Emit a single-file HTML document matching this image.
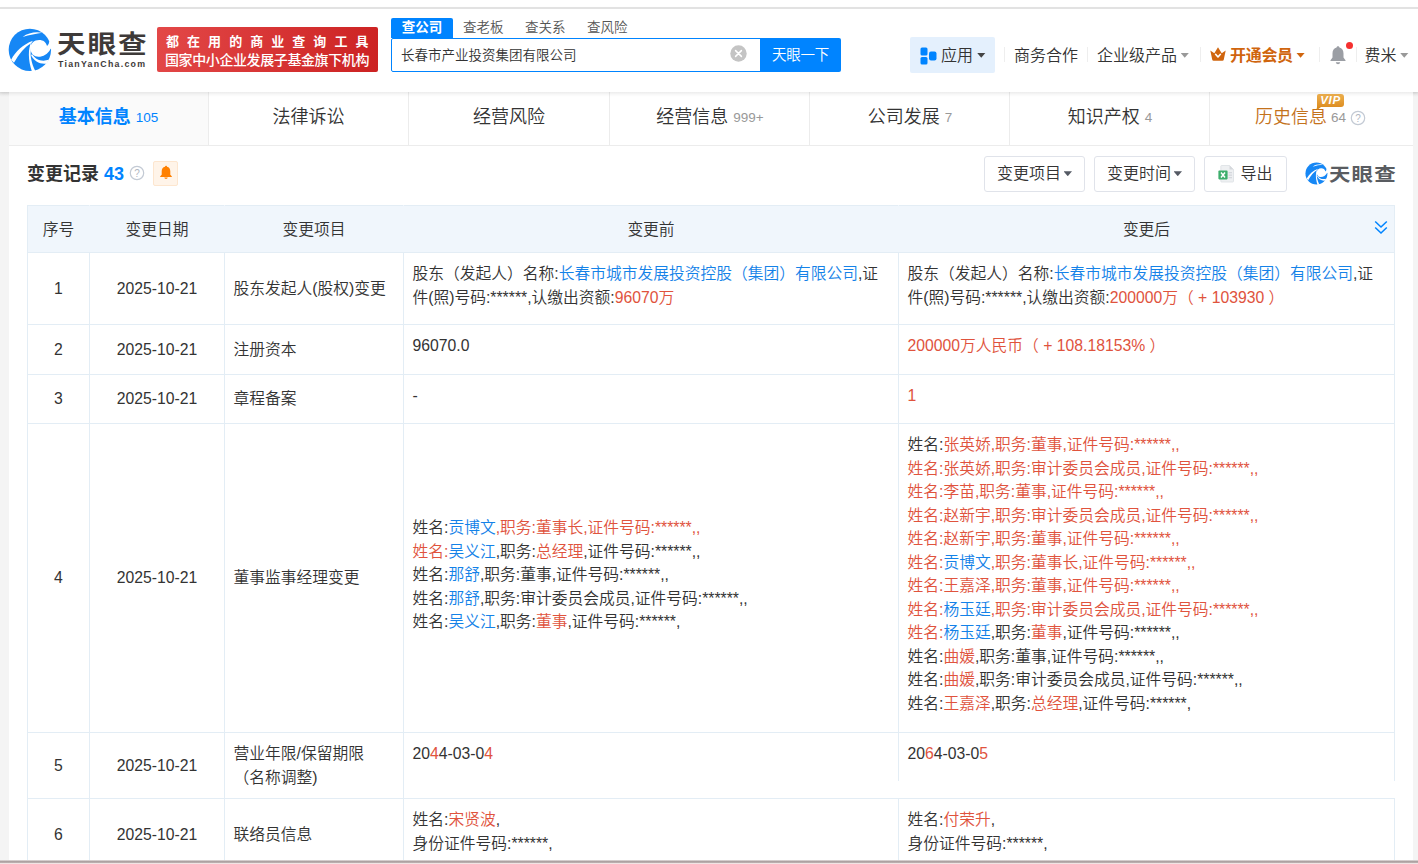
<!DOCTYPE html>
<html lang="zh-CN">
<head>
<meta charset="utf-8">
<title>天眼查 - 变更记录</title>
<style>
*{box-sizing:border-box;margin:0;padding:0}
html,body{width:1418px;height:864px;overflow:hidden;background:#fff}
body{font-weight:350;font-family:"Liberation Sans","Noto Sans CJK SC",sans-serif;color:#333;font-size:16px;position:relative}
.abs{position:absolute}
#topline{left:0;top:7px;width:1418px;height:2px;background:#e2e2e2}
#pagebg{left:0;top:92px;width:1418px;height:772px;background:#f4f4f4}
#panel{left:9px;top:92px;width:1404px;height:772px;background:#fff}
#header{left:0;top:9px;width:1418px;height:83px;background:#fff;box-shadow:0 1px 4px rgba(0,0,0,.12)}
#botline{left:0;top:860px;width:1418px;height:4px;background:linear-gradient(#e9e5e5 0,#aca1a1 35%,#b3a8a8 60%,#f2e5e5 88%)}

/* logo */
#logotext{left:56.600px;top:26px;font-size:25px;line-height:36px;font-weight:700;color:#3e3a39;letter-spacing:1.6px;white-space:nowrap;transform:scaleX(1.145);transform-origin:0 0}
#logosub{left:58px;top:58px;font-size:8.8px;line-height:12px;font-weight:700;color:#3e3a39;letter-spacing:1.25px;white-space:nowrap}
#banner{left:157px;top:27px;width:221px;height:45px;border-radius:2px;background:linear-gradient(100deg,#e34848,#cc2222);color:#fff;font-weight:700;white-space:nowrap}
#banner .l1{position:absolute;left:9px;top:6px;font-size:13px;line-height:18px;letter-spacing:8.05px}
#banner .l2{position:absolute;left:8px;top:23.5px;font-size:14px;line-height:18px;letter-spacing:-.4px;font-weight:500}

/* search */
#stab{left:391px;top:18px;width:62px;height:20px;border-radius:2px 2px 0 0;background:#0084ff;color:#fff;font-size:13.5px;line-height:19px;text-align:center;font-weight:700}
.stab2{top:18px;font-size:13.5px;line-height:19px;color:#555;white-space:nowrap}
#sbox{left:391px;top:38px;width:370px;height:34px;border:1px solid #0084ff;border-radius:2px 0 0 2px;background:#fff}
#sbox span{position:absolute;left:9px;top:0;line-height:33px;font-size:13.5px;color:#333;white-space:nowrap}
#sbtn{left:760px;top:38px;width:81px;height:34px;background:#0084ff;color:#fff;font-size:14.5px;line-height:35px;text-align:center;border-radius:0 2px 2px 0;letter-spacing:-.3px}
#sclear{left:730px;top:45px;width:17px;height:17px}

/* nav */
#app{left:910px;top:37px;width:85px;height:36px;background:#e4f0fd;border-radius:2px}
.nav{top:45px;font-size:16px;line-height:22px;color:#333;white-space:nowrap}
.caret{display:inline-block;width:8.5px;height:4.8px;background:#999;clip-path:polygon(0 0,100% 0,50% 100%);vertical-align:middle;margin-left:3.5px;position:relative;top:-1.5px}
.vsep{top:47px;width:1px;height:15px;background:#eee;margin-left:.5px}

/* tabs */
.tab{top:92px;width:200px;height:54px;border-right:1px solid #ececec;border-bottom:1px solid #ececec;text-align:center;font-size:18px;line-height:50px;color:#333;white-space:nowrap;background:#fff}
.tab small{font-size:13.5px;color:#999;margin-left:5px;font-weight:350;position:relative;top:-1px}
.tab.on{background:#fafafa;color:#0084ff;font-weight:700}
.tab.on small{color:#0084ff}

/* section head */
#sect{left:27px;top:162px;font-size:18px;line-height:25px;font-weight:700;color:#333;white-space:nowrap}
.btn{top:156px;height:36px;border:1px solid #e0e3ea;border-radius:3px;background:#fff;font-size:16px;line-height:34px;color:#333;text-align:center;white-space:nowrap}

/* table */
#tbl{left:27px;top:205px;width:1366.500px;border-collapse:collapse;table-layout:fixed;font-size:15.75px}
#tbl th{background:#f0f6fc;height:47px;padding-bottom:2px;font-weight:350;font-size:15.75px;color:#333;border:1px solid #e3edf5;border-left-color:#f0f6fc;border-right-color:#f0f6fc;text-align:center}
#tbl th:first-child{border-left-color:#e3edf5}#tbl th:last-child{border-right-color:#e3edf5}
#tbl td{border:1px solid #e3edf5;vertical-align:middle;line-height:23.5px;padding:0 9px 0 8.5px;color:#333}
#tbl td.c{text-align:center;padding:0}
#tbl td.t{vertical-align:top}
.r{color:#e0533d}
.b{color:#1482e8}
</style>
</head>
<body>
<div class="abs" id="pagebg"></div>
<div class="abs" id="panel"></div>
<div class="abs" id="header"></div>
<div class="abs" id="topline"></div>

<!-- logo -->
<svg class="abs" style="left:4px;top:24px" width="52" height="52" viewBox="0 0 864 864">
  <circle cx="430" cy="429" r="352" fill="#1687f5"/>
  <path d="M715 365 C700 300 650 265 585 265 C500 265 440 320 440 400 C440 470 470 520 520 537 C610 562 720 520 775 410 L810 420 L810 280 L752 292 C750 320 738 345 715 365 Z" fill="#fff"/>
  <path d="M310 214 C400 142 540 122 636 147 C540 162 420 184 310 214 Z" fill="#fff"/>
  <path d="M118 594 C195 450 310 342 480 278 L452 318 C345 378 250 495 165 645 Z" fill="#fff"/>
  <path d="M454 304 C400 400 395 600 468 800 L520 780 C455 650 432 520 446 440 Z" fill="#fff"/>
  <path d="M466 500 C520 596 625 632 745 596 L712 658 C600 675 500 622 450 520 Z" fill="#fff"/>
</svg>
<div class="abs" id="logotext">天眼查</div>
<div class="abs" id="logosub">TianYanCha.com</div>
<div class="abs" id="banner"><span class="l1">都在用的商业查询工具</span><span class="l2">国家中小企业发展子基金旗下机构</span></div>

<!-- search -->
<div class="abs" id="stab">查公司</div>
<div class="abs stab2" style="left:463px">查老板</div>
<div class="abs stab2" style="left:525px">查关系</div>
<div class="abs stab2" style="left:587px">查风险</div>
<div class="abs" id="sbox"><span>长春市产业投资集团有限公司</span></div>
<svg class="abs" id="sclear" viewBox="0 0 17 17"><circle cx="8.5" cy="8.5" r="8.200" fill="#c4c4c4"/><path d="M5.600 5.600 L11.400 11.400 M11.400 5.600 L5.600 11.400" stroke="#fff" stroke-width="1.500" stroke-linecap="round"/></svg>
<div class="abs" id="sbtn">天眼一下</div>

<!-- nav -->
<div class="abs" id="app"></div>
<svg class="abs" style="left:920px;top:46.500px" width="17" height="18" viewBox="0 0 17 18"><rect x="0.500" y="0.500" width="7" height="8" rx="1.500" fill="#0084ff"/><rect x="0.500" y="10" width="7" height="7.500" rx="1.500" fill="#0084ff"/><rect x="9" y="4.500" width="7.500" height="9" rx="2" fill="#0084ff"/></svg>
<div class="abs nav" style="left:941px">应用<span class="caret" style="background:#444;margin-left:4px"></span></div>
<div class="abs vsep" style="left:1003px"></div>
<div class="abs nav" style="left:1014px">商务合作</div>
<div class="abs vsep" style="left:1086px"></div>
<div class="abs nav" style="left:1097px">企业级产品<span class="caret"></span></div>
<div class="abs vsep" style="left:1199px"></div>
<svg class="abs" style="left:1210px;top:47px" width="16" height="14" viewBox="0 0 16 14"><path d="M0.300 3.600 L4.300 6.200 L8 0.200 L11.700 6.200 L15.700 3.600 L13.800 12.600 Q13.600 13.800 12.400 13.800 L3.600 13.800 Q2.400 13.800 2.200 12.600 Z" fill="#d0650e"/><path d="M5.600 7.300 L8 10 L10.400 7.300" fill="none" stroke="#fff" stroke-width="1.600" stroke-linecap="round" stroke-linejoin="round"/></svg>
<div class="abs nav" style="left:1230px;color:#d0650e;font-weight:700;letter-spacing:-.3px">开通会员<span class="caret" style="background:#d0650e"></span></div>
<div class="abs vsep" style="left:1318px"></div>
<svg class="abs" style="left:1329px;top:45px" width="18" height="21" viewBox="0 0 18 21"><path d="M9 1.200 C9.900 1.200 10.400 1.800 10.400 2.600 C13 3.300 14.500 5.500 14.500 8.500 L14.500 12.500 L16.500 15.200 L16.500 16 L1.500 16 L1.500 15.200 L3.500 12.500 L3.500 8.500 C3.500 5.500 5 3.300 7.600 2.600 C7.600 1.800 8.100 1.200 9 1.200 Z" fill="#9b9ea4"/><path d="M6.800 17.300 L11.200 17.300 C11 18.600 10.100 19.300 9 19.300 C7.900 19.300 7 18.600 6.800 17.300 Z" fill="#9b9ea4"/></svg>
<div class="abs" style="left:1346px;top:41.500px;width:7px;height:7px;border-radius:50%;background:#f5302f"></div>
<div class="abs vsep" style="left:1355px"></div>
<div class="abs nav" style="left:1364.500px">费米<span class="caret"></span></div>

<!-- tabs -->
<div class="abs tab on" style="left:9px">基本信息<small>105</small></div>
<div class="abs tab" style="left:209px">法律诉讼</div>
<div class="abs tab" style="left:409px;width:201px">经营风险</div>
<div class="abs tab" style="left:610px;padding-left:1px">经营信息<small>999+</small></div>
<div class="abs tab" style="left:810px;padding-left:1px">公司发展<small>7</small></div>
<div class="abs tab" style="left:1010px;padding-left:1px">知识产权<small>4</small></div>
<div class="abs tab" style="left:1210px;width:203px;border-right:0;text-align:left;padding-left:45px;color:#c4721c">历史信息<small style="margin-left:4px">64</small></div>
<svg class="abs" style="left:1350px;top:110px" width="16" height="16" viewBox="0 0 16 16"><circle cx="8" cy="8" r="6.700" fill="none" stroke="#c3cad4" stroke-width="1.200"/><text x="8" y="11.600" text-anchor="middle" font-family="Liberation Sans, sans-serif" font-size="10" fill="#b0b6bf">?</text></svg>
<div class="abs" style="left:1317px;top:94px;width:27px;height:13px;border-radius:2px 3px 3px 0;background:linear-gradient(180deg,#eeb04e,#dd8e22);color:#fff;font-size:11.500px;line-height:13px;font-weight:700;font-style:italic;text-align:center;letter-spacing:.6px">VIP</div>
<div class="abs" style="left:1317px;top:107px;width:0;height:0;border-top:3px solid #d98a1e;border-right:4px solid transparent"></div>

<div class="abs" style="left:0;top:92px;width:1418px;height:5px;background:linear-gradient(rgba(0,0,0,.075),rgba(0,0,0,.02) 60%,rgba(0,0,0,0))"></div>
<!-- section head -->
<div class="abs" id="sect">变更记录 <span style="color:#0084ff">43</span></div>
<svg class="abs" style="left:129px;top:165px" width="16" height="16" viewBox="0 0 16 16"><circle cx="8" cy="8" r="6.700" fill="none" stroke="#c3cad4" stroke-width="1.200"/><text x="8" y="11.600" text-anchor="middle" font-family="Liberation Sans, sans-serif" font-size="10" fill="#b0b6bf">?</text></svg>
<div class="abs" style="left:153px;top:161px;width:25px;height:25px;border:1px solid #fde6cf;border-radius:2px;background:#fff4e9"></div>
<svg class="abs" style="left:159px;top:165px" width="14" height="15" viewBox="0 0 14 15"><path d="M7 0.800 C7.600 0.800 8 1.200 8 1.700 C10.200 2.200 11.300 3.900 11.300 6.200 L11.300 9.800 L12.800 11.300 L12.800 12 L1.200 12 L1.200 11.300 L2.700 9.800 L2.700 6.200 C2.700 3.900 3.800 2.200 6 1.700 C6 1.200 6.400 0.800 7 0.800 Z" fill="#ff8000"/><path d="M5.300 12.600 L8.700 12.600 C8.500 13.600 7.800 14 7 14 C6.200 14 5.500 13.600 5.300 12.600 Z" fill="#ff8000"/></svg>

<div class="abs btn" style="left:984px;width:101px">变更项目<span class="caret" style="background:#555a64;margin-left:2.500px;top:-1px"></span></div>
<div class="abs btn" style="left:1094px;width:101px">变更时间<span class="caret" style="background:#555a64;margin-left:2.500px;top:-1px"></span></div>
<div class="abs btn" style="left:1204px;width:83px;padding-left:22px">导出</div>
<svg class="abs" style="left:1218px;top:165px" width="17" height="18" viewBox="0 0 17 18"><path d="M3.500 0.500 L11.500 0.500 L15.500 4.500 L15.500 16.300 Q15.500 17 14.800 17 L3.500 17 Q2.800 17 2.800 16.300 L2.800 1.200 Q2.800 0.500 3.500 0.500 Z" fill="#eef0f2" stroke="#dcdfe3" stroke-width=".8"/><path d="M11.500 0.500 L11.500 4.500 L15.500 4.500 Z" fill="#d5d8dc"/><rect x="10.500" y="7" width="3.500" height="1.300" fill="#d5d8dc"/><rect x="10.500" y="9.500" width="3.500" height="1.300" fill="#d5d8dc"/><rect x="10.500" y="12" width="3.500" height="1.300" fill="#d5d8dc"/><rect x="0.400" y="5.600" width="9.200" height="8.800" rx=".8" fill="#3dae6c"/><path d="M3 7.600 L7 12.400 M7 7.600 L3 12.400" stroke="#fff" stroke-width="1.500"/></svg>
<svg class="abs" style="left:1302.500px;top:159.500px" width="27" height="27" viewBox="0 0 864 864">
  <circle cx="430" cy="429" r="352" fill="#1687f5"/>
  <path d="M715 365 C700 300 650 265 585 265 C500 265 440 320 440 400 C440 470 470 520 520 537 C610 562 720 520 775 410 L810 420 L810 280 L752 292 C750 320 738 345 715 365 Z" fill="#fff"/>
  <path d="M310 214 C400 142 540 122 636 147 C540 162 420 184 310 214 Z" fill="#fff"/>
  <path d="M118 594 C195 450 310 342 480 278 L452 318 C345 378 250 495 165 645 Z" fill="#fff"/>
  <path d="M454 304 C400 400 395 600 468 800 L520 780 C455 650 432 520 446 440 Z" fill="#fff"/>
  <path d="M466 500 C520 596 625 632 745 596 L712 658 C600 675 500 622 450 520 Z" fill="#fff"/>
</svg>
<div class="abs" style="left:1329px;top:162px;font-size:18.500px;line-height:26px;font-weight:700;color:#595c61;letter-spacing:1px;white-space:nowrap;transform:scaleX(1.16);transform-origin:0 0">天眼查</div>


<!-- table -->
<table class="abs" id="tbl">
<colgroup><col style="width:62px"><col style="width:135px"><col style="width:179px"><col style="width:495px"><col style="width:496px"></colgroup>
<tr><th>序号</th><th>变更日期</th><th>变更项目</th><th>变更前</th><th>变更后</th></tr>
<tr style="height:72px"><td class="c">1</td><td class="c">2025-10-21</td><td>股东发起人(股权)变更</td><td class="t" style="padding-top:9px">股东（发起人）名称:<span class="b">长春市城市发展投资控股（集团）有限公司</span>,证件(照)号码:******,认缴出资额:<span class="r">96070万</span></td><td class="t" style="padding-top:9px">股东（发起人）名称:<span class="b">长春市城市发展投资控股（集团）有限公司</span>,证件(照)号码:******,认缴出资额:<span class="r">200000万（ + 103930 ）</span></td></tr>
<tr style="height:50px"><td class="c">2</td><td class="c">2025-10-21</td><td>注册资本</td><td class="t" style="padding-top:9px">96070.0</td><td class="t" style="padding-top:9px"><span class="r">200000万人民币（ + 108.18153% ）</span></td></tr>
<tr style="height:49px"><td class="c">3</td><td class="c">2025-10-21</td><td>章程备案</td><td class="t" style="padding-top:9px">-</td><td class="t" style="padding-top:9px"><span class="r">1</span></td></tr>
<tr style="height:309px"><td class="c">4</td><td class="c">2025-10-21</td><td>董事监事经理变更</td>
<td style="padding-bottom:6px">姓名:<span class="b">贡博文</span><span class="r">,职务:董事长,证件号码:******,,<br>姓名:</span><span class="b">吴义江</span>,职务:<span class="r">总经理</span>,证件号码:******,,<br>姓名:<span class="b">那舒</span>,职务:董事,证件号码:******,,<br>姓名:<span class="b">那舒</span>,职务:审计委员会成员,证件号码:******,,<br>姓名:<span class="b">吴义江</span>,职务:<span class="r">董事</span>,证件号码:******,</td>
<td class="t" style="padding-top:9px">姓名:<span class="r">张英娇,职务:董事,证件号码:******,,<br>姓名:张英娇,职务:审计委员会成员,证件号码:******,,<br>姓名:李苗,职务:董事,证件号码:******,,<br>姓名:赵新宇,职务:审计委员会成员,证件号码:******,,<br>姓名:赵新宇,职务:董事,证件号码:******,,<br>姓名:</span><span class="b">贡博文</span><span class="r">,职务:董事长,证件号码:******,,<br>姓名:王嘉泽,职务:董事,证件号码:******,,<br>姓名:</span><span class="b">杨玉廷</span><span class="r">,职务:审计委员会成员,证件号码:******,,<br>姓名:</span><span class="b">杨玉廷</span>,职务:<span class="r">董事</span>,证件号码:******,,<br>姓名:<span class="r">曲媛</span>,职务:董事,证件号码:******,,<br>姓名:<span class="r">曲媛</span>,职务:审计委员会成员,证件号码:******,,<br>姓名:<span class="r">王嘉泽</span>,职务:<span class="r">总经理</span>,证件号码:******,</td></tr>
<tr style="height:66px"><td class="c">5</td><td class="c">2025-10-21</td><td>营业年限/保留期限（名称调整)</td><td class="t" style="padding-top:9px">20<span class="r">4</span>4-03-0<span class="r">4</span></td><td class="t" style="padding-top:9px">20<span class="r">6</span>4-03-0<span class="r">5</span></td></tr>
<tr style="height:72px"><td class="c">6</td><td class="c">2025-10-21</td><td>联络员信息</td><td class="t" style="padding-top:9px">姓名:<span class="r">宋贤波</span>,<br>身份证件号码:******,</td><td class="t" style="padding-top:9px">姓名:<span class="r">付荣升</span>,<br>身份证件号码:******,</td></tr>
</table>

<svg class="abs" style="left:1374px;top:220px" width="14" height="15" viewBox="0 0 14 15"><path d="M1.200 1.500 L7 7 L12.800 1.500 M1.200 7.500 L7 13 L12.800 7.500" fill="none" stroke="#0084ff" stroke-width="1.500"/></svg>
<div class="abs" style="left:1393px;top:781px;width:3px;height:17px;background:#fff"></div><div class="abs" style="left:897px;top:781px;width:3px;height:17px;background:#fff"></div>
<div class="abs" id="botline"></div>
</body>
</html>
